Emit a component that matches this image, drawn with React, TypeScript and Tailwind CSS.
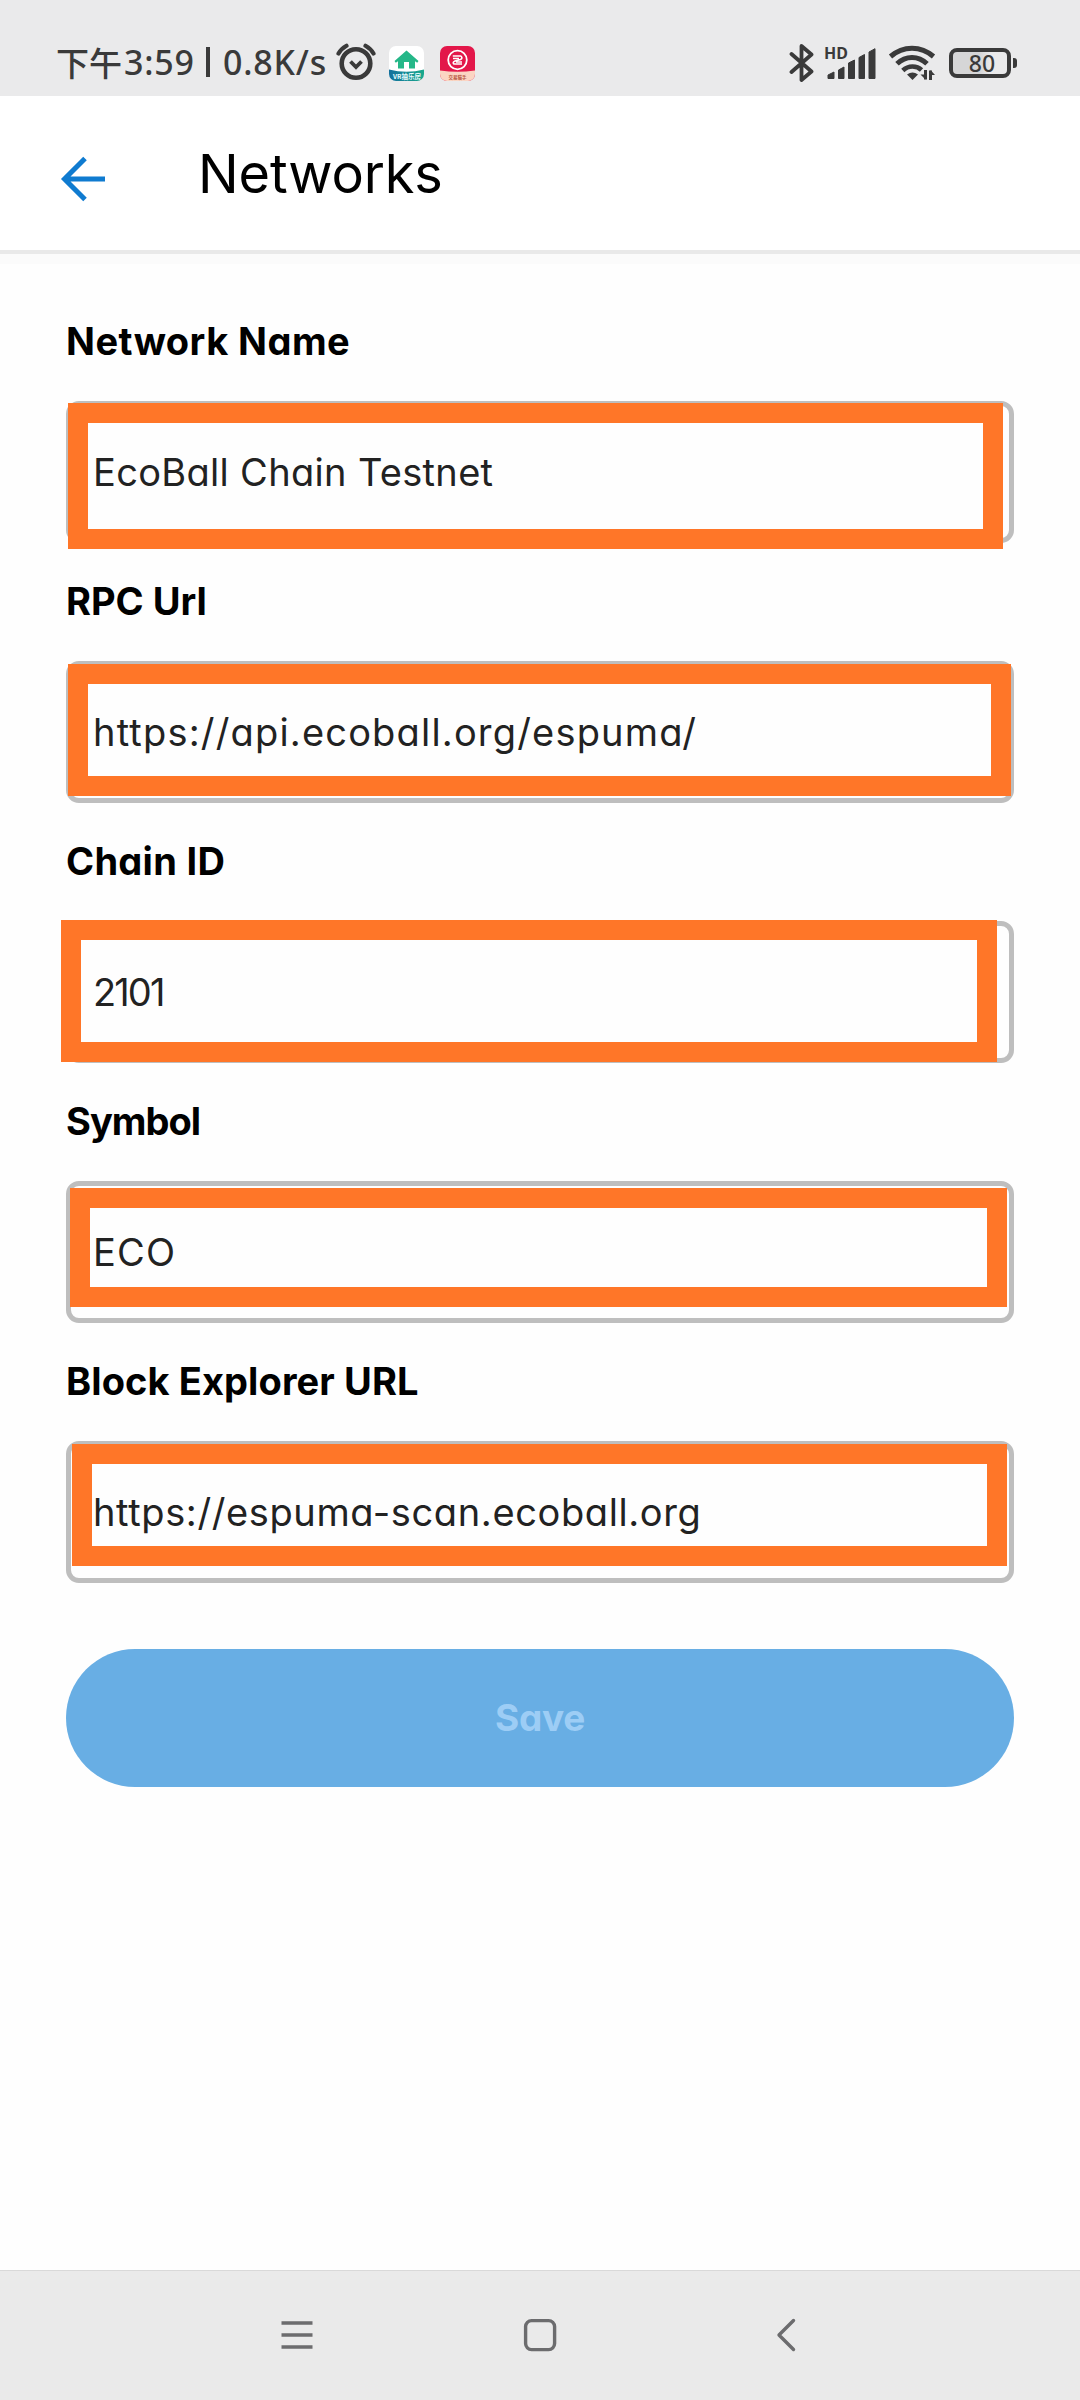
type Field = {
  label: string;
  value: string;
  labelClass: string;
  valueClass: string;
  frameClass: string;
};

const fields: Field[] = [
  {
    label: "Network Name",
    value: "EcoBall Chain Testnet",
    labelClass: "tracking-[0.45px]",
    valueClass: "tracking-[0.32px]",
    frameClass: "left-[2px] top-[2px] h-[146px] w-[935px]",
  },
  {
    label: "RPC Url",
    value: "https://api.ecoball.org/espuma/",
    labelClass: "tracking-normal",
    valueClass: "tracking-[1.18px]",
    frameClass: "left-[2px] top-[3px] h-[132px] w-[943px]",
  },
  {
    label: "Chain ID",
    value: "2101",
    labelClass: "tracking-[0.3px]",
    valueClass: "tracking-[-1.9px]",
    frameClass: "left-[-5px] top-[-1px] h-[142px] w-[936px]",
  },
  {
    label: "Symbol",
    value: "ECO",
    labelClass: "tracking-[-1px]",
    valueClass: "tracking-[1.2px]",
    frameClass: "left-[4px] top-[7px] h-[119px] w-[937px]",
  },
  {
    label: "Block Explorer URL",
    value: "https://espuma-scan.ecoball.org",
    labelClass: "tracking-[0.1px]",
    valueClass: "tracking-[0.62px]",
    frameClass: "left-[6px] top-[3px] h-[122px] w-[935px]",
  },
];

function AlarmIcon() {
  return (
    <svg width="40" height="38" viewBox="0 0 40 38" fill="none" stroke="#3a3a3a">
      <circle cx="20" cy="20.500" r="14.300" strokeWidth="4.600" />
      <path d="M14.500 18.500l5.500 5.500 5.500-5.500" strokeWidth="3.800" />
      <path d="M2.500 10.500Q5 6 10.500 2.800M37.500 10.500Q35 6 29.500 2.800" strokeWidth="4.200" strokeLinecap="round" />
    </svg>
  );
}

function HouseAppIcon() {
  return (
    <svg width="35" height="35" viewBox="0 0 35 35">
      <defs>
        <clipPath id="houseClip">
          <rect width="35" height="35" rx="7" />
        </clipPath>
        <linearGradient id="houseBand" x1="0" x2="1">
          <stop offset="0" stopColor="#14709c" />
          <stop offset="1" stopColor="#19a98c" />
        </linearGradient>
      </defs>
      <g clipPath="url(#houseClip)">
        <rect width="35" height="35" fill="#fff" />
        <path d="M0 23.500Q17.500 28 35 23.500V35H0z" fill="url(#houseBand)" />
        <path d="M17.500 4.500L29.500 15l-1.300 1.800L26 15.300V22.500h-6v-6.500h-5v6.500H9v-7.200l-2.200 1.500L5.500 15z" fill="#25b788" />
        <text x="18" y="33" textAnchor="middle" fontSize="6.500" fontWeight="700" fill="#e9fbff" className="font-['Noto_Sans_CJK_SC',sans-serif]">
          VR抽乐房
        </text>
      </g>
    </svg>
  );
}

function RedAppIcon() {
  return (
    <svg width="35" height="35" viewBox="0 0 35 35">
      <defs>
        <clipPath id="redClip">
          <rect width="35" height="35" rx="7" />
        </clipPath>
      </defs>
      <g clipPath="url(#redClip)">
        <rect width="35" height="35" fill="#e3174a" />
        <path d="M0 24.500Q17.500 27 35 24.500V35H0z" fill="#fbd5c3" />
        <circle cx="17.500" cy="14" r="9.300" fill="none" stroke="#fff" strokeWidth="1.800" />
        <path d="M12.800 10h8q2.400 2-.3 3.500l-5.500 1.500q-3 1.500-1 3h8M13 12.500h6M16 16h6" fill="none" stroke="#fff" strokeWidth="1.600" />
        <text x="17.500" y="32.500" textAnchor="middle" fontSize="4.500" fontWeight="700" fill="#b8573f" className="font-['Noto_Sans_CJK_SC',sans-serif]">
          交易猫手
        </text>
      </g>
    </svg>
  );
}

function BluetoothIcon() {
  return (
    <svg width="26" height="40" viewBox="0 0 26 40" fill="none" stroke="#3a3a3a" strokeWidth="3.800" strokeLinejoin="round" strokeLinecap="round">
      <path d="M2.500 11L22.500 28.500 12.500 37V3L22.500 11.500 2.500 29" />
    </svg>
  );
}

function SignalIcon() {
  return (
    <svg width="50" height="34" viewBox="0 0 50 34" fill="#3a3a3a" stroke="#3a3a3a" strokeWidth="1" strokeLinejoin="round">
      <path d="M1 31.500V28l6-3v6.500zM11.500 31.500V23l5.500-3v11.500zM21.500 31.500V16l6-3v18.500zM32 31.500V10.500l5.500-3v24zM42 31.500V5l6-3.300v29.800z" />
    </svg>
  );
}

function WifiIcon() {
  return (
    <svg width="48" height="38" viewBox="0 0 48 38" fill="none" stroke="#3a3a3a" strokeWidth="5">
      <path d="M2.500 13.500Q12 5.200 24 5.200t21.500 8.300" />
      <path d="M9 20.800Q15.500 14.500 24 14.500t15 6.300" />
      <path d="M14.800 27.500Q19 23.500 24.500 23.500t9 3.500" strokeWidth="4.600" />
      <path d="M19 31.500q5.500-4 11 0l-5.500 5.500z" fill="#3a3a3a" stroke="none" />
      <path d="M37.500 27v9.500M42.500 37v-9.500" strokeWidth="3" />
      <path d="M32.500 31.500h5v5zM47 32h-4.500v-5z" fill="#3a3a3a" stroke="none" />
    </svg>
  );
}

function StatusBar() {
  return (
    <header className="flex h-[96px] shrink-0 items-start justify-between bg-[#eaeaeb] pl-[56px] pr-[63px] text-[#3a3a3a]">
      <div className="flex items-start">
        <div className="mt-[37px] flex h-[50px] items-center font-['Noto_Sans','Noto_Sans_CJK_SC',sans-serif] text-[34px] leading-[50px] font-medium whitespace-pre">
          <span className="w-[68px] font-['Noto_Sans_CJK_SC',sans-serif] text-[33px]">下午</span>
          <span className="w-[76px] tracking-[0.8px]">3:59</span>
          <span className="flex w-[23px] items-center">
            <span className="ml-[6px] h-[30px] w-[3.5px] bg-[#3a3a3a]" />
          </span>
          <span className="w-[108px] tracking-[0.8px]">0.8K/s</span>
        </div>
        <div className="mt-[43px] ml-[5px]">
          <AlarmIcon />
        </div>
        <div className="mt-[46px] ml-[13px] flex gap-4">
          <HouseAppIcon />
          <RedAppIcon />
        </div>
      </div>
      <div className="flex items-start">
        <div className="mt-[43px]">
          <BluetoothIcon />
        </div>
        <div className="relative mt-[47px] ml-[12px]">
          <SignalIcon />
          <span className="absolute -top-[2px] -left-[3px] font-['Noto_Sans',sans-serif] text-[16px] leading-4 font-bold">HD</span>
        </div>
        <div className="mt-[43px] ml-[11px]">
          <WifiIcon />
        </div>
        <div className="mt-[48px] ml-[13px] flex items-center gap-0.5">
          <div className="flex h-[30px] w-[62px] items-center justify-center rounded-[8px] border-4 border-[#3a3a3a] bg-gradient-to-r from-[#d6d6d7] from-50% to-[#eaeaeb] to-70% pl-1 font-['Noto_Sans',sans-serif] text-[23px] leading-none font-medium">
            80
          </div>
          <div className="h-[10px] w-1 rounded-r-[3px] bg-[#3a3a3a]" />
        </div>
      </div>
    </header>
  );
}

function TitleBar() {
  return (
    <div className="flex h-[158px] shrink-0 items-start border-b-4 border-[#e9e9e9] bg-white pl-[60px]">
      <svg className="mt-[60px]" width="46" height="46" viewBox="0 0 46 46" fill="none" stroke="#0f7bd0" strokeWidth="5">
        <path d="M25 2.500L4.500 23 25 43.500M4.500 23H45" />
      </svg>
      <h1 className="mt-[45px] ml-[92px] text-[54px] leading-[66px] font-normal tracking-[-0.1px] text-black">Networks</h1>
    </div>
  );
}

function NetworkField({ label, value, labelClass, valueClass, frameClass }: Field) {
  return (
    <div>
      <div className={`text-[38px] leading-10 font-bold text-black ${labelClass}`}>{label}</div>
      <div className="relative mt-10 h-[142px] w-[948px]">
        <div className="flex h-full items-center rounded-[13px] border-[5px] border-[#bebebe] pl-[22px]">
          <span className={`text-[38px] leading-10 text-[#222] ${valueClass}`}>{value}</span>
        </div>
        <div className={`absolute border-[20px] border-[#ff7628] ${frameClass}`} />
      </div>
    </div>
  );
}

function NavBar() {
  return (
    <nav className="flex h-[130px] shrink-0 items-start border-t border-[#d9d9d9] bg-[#eaeaea] pt-[46px] pl-[281px] text-[#6c6c6e]">
      <svg width="32" height="36" viewBox="0 0 32 36" fill="none" stroke="currentColor" strokeWidth="3.400">
        <path d="M.5 6h31M.5 18h31M.5 30h31" />
      </svg>
      <svg className="ml-[210px]" width="36" height="36" viewBox="0 0 36 36" fill="none" stroke="currentColor" strokeWidth="3.400">
        <rect x="2.600" y="3.600" width="29" height="29" rx="6" />
      </svg>
      <svg className="ml-[216px]" width="24" height="36" viewBox="0 0 24 36" fill="none" stroke="currentColor" strokeWidth="3.400" strokeLinecap="round" strokeLinejoin="round">
        <path d="M18.500 3.500L4 18l14.500 14.500" />
      </svg>
    </nav>
  );
}

export default function App() {
  return (
    <div className="flex h-[2400px] w-[1080px] flex-col overflow-hidden bg-[#fefefe] font-['Inter',sans-serif] [font-feature-settings:'cv11']">
      <StatusBar />
      <TitleBar />
      <div className="h-[10px] shrink-0 bg-[#fbfbfb]" />
      <main className="grow px-[66px] pt-[57px]">
        <form className="flex flex-col gap-[38px]">
          {fields.map((f) => (
            <NetworkField key={f.label} {...f} />
          ))}
          <button
            type="button"
            className="mt-[28px] h-[138px] w-[948px] rounded-full bg-[#68aee4] text-[37px] leading-10 font-bold tracking-[-0.3px] text-[#9dcdf5]"
          >
            Save
          </button>
        </form>
      </main>
      <NavBar />
    </div>
  );
}
